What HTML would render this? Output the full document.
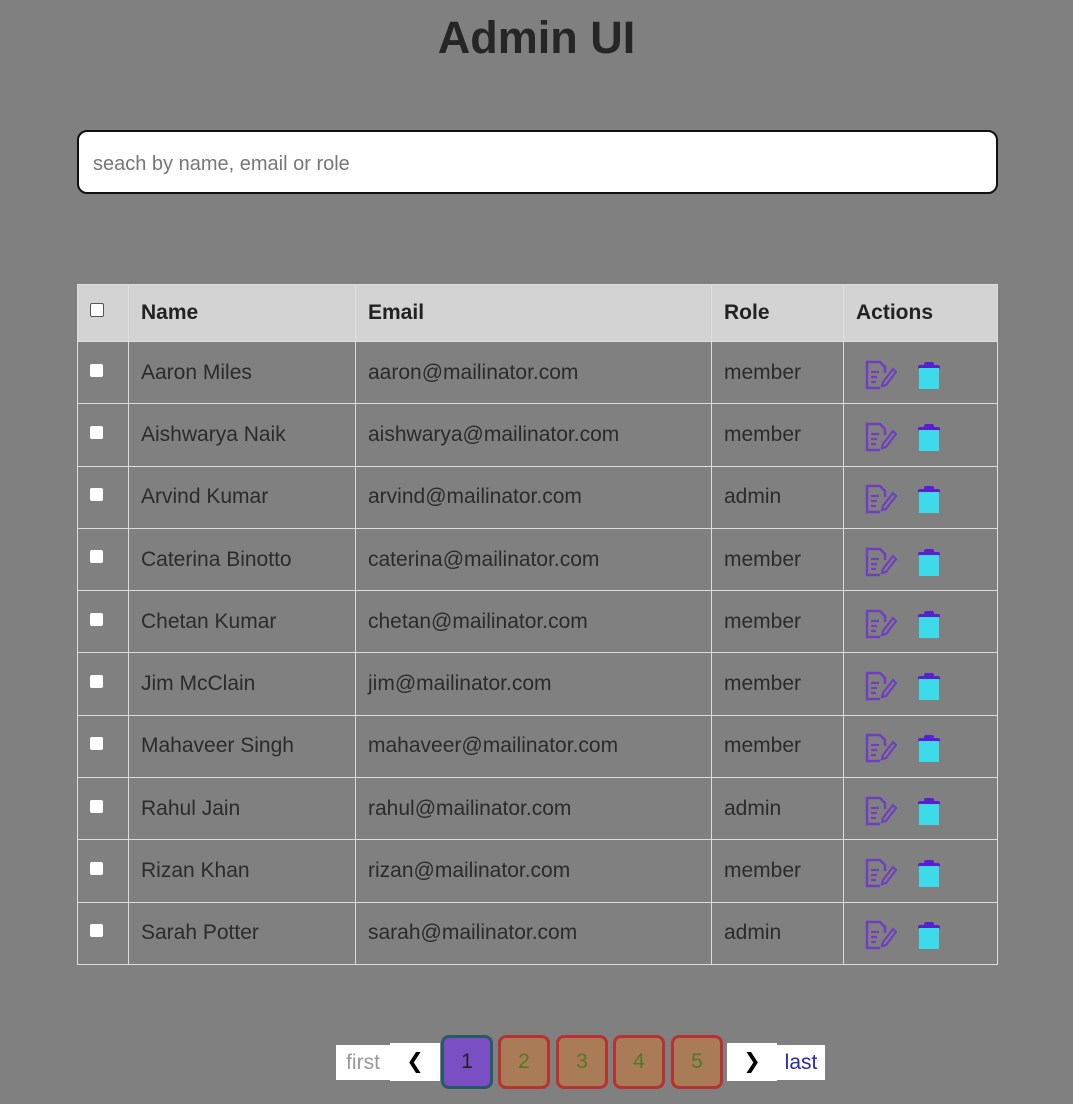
<!DOCTYPE html>
<html><head><style>
body{margin:0;background:#808080;font-family:"Liberation Sans","DejaVu Sans",sans-serif;width:1073px;height:1104px;position:relative;overflow:hidden}
h1{position:absolute;left:0;right:0;top:12px;margin:0;text-align:center;font-size:45px;font-weight:bold;color:#262626}
.search{position:absolute;left:77px;top:130px;background:#fff;border:2px solid #111;border-radius:10px;box-sizing:border-box;width:921px;height:64px;font-size:20px;color:#777;padding:21px 14px}
table{position:absolute;left:77px;top:284px;width:921px;border-collapse:collapse;table-layout:fixed}
td,th{border:1.5px solid #ddd;text-align:left;padding:0 12px;font-size:21px;color:#2b2b2b;overflow:hidden;white-space:nowrap}
th{background:#d3d3d3;height:56px;font-weight:bold;color:#222}
tr.r td{height:61.3px}
.cb{display:inline-block;width:13px;height:13px;background:#fff;border-radius:2px;vertical-align:middle;margin-top:-6px}
th .cb{border:1px solid #555;width:12px;height:12px}
.ic{display:inline-block;vertical-align:middle;margin-top:4px}
.box{position:absolute;background:#fff;font-size:21px;text-align:center;box-sizing:border-box}
.num{position:absolute;top:1035px;width:52px;height:54px;border:3px solid #b83232;border-radius:8px;background:#a97b56;color:#4e7a2a;font-size:21px;text-align:center;line-height:48px;box-sizing:border-box}
</style></head><body>
<h1>Admin UI</h1>
<div class="search">seach by name, email or role</div>
<table>
<colgroup><col style="width:51px"><col style="width:227px"><col style="width:356px"><col style="width:132px"><col></colgroup>
<tr><th><span class="cb"></span></th><th>Name</th><th>Email</th><th>Role</th><th>Actions</th></tr>
</table>
<script>
const d=[["Aaron Miles","aaron","member"],["Aishwarya Naik","aishwarya","member"],["Arvind Kumar","arvind","admin"],["Caterina Binotto","caterina","member"],["Chetan Kumar","chetan","member"],["Jim McClain","jim","member"],["Mahaveer Singh","mahaveer","member"],["Rahul Jain","rahul","admin"],["Rizan Khan","rizan","member"],["Sarah Potter","sarah","admin"]];
const edit='<svg class="ic" width="34" height="32" viewBox="0 0 34 32" style="margin-left:7px"><path d="M17 29H4V3h13l5 5v6" fill="none" stroke="#6f3fbf" stroke-width="2.5"/><path d="M8 13h8M8 18h6M8 23h5" stroke="#6f3fbf" stroke-width="2.2"/><path d="M30 10l3 3-10 13-4 1 1-4z" fill="none" stroke="#6f3fbf" stroke-width="2.2"/></svg>';
const del='<svg class="ic" width="26" height="30" viewBox="0 0 26 30" style="margin-left:19px"><rect x="2" y="5" width="22" height="4" rx="2" fill="#5a1fd0"/><rect x="8" y="2" width="10" height="4" rx="2" fill="#5a1fd0"/><rect x="3" y="8" width="20" height="21" fill="#3ddbea"/></svg>';
let h='';d.forEach(r=>{h+=`<tr class="r"><td><span class="cb"></span></td><td>${r[0]}</td><td>${r[1]}@mailinator.com</td><td>${r[2]}</td><td>${edit}${del}</td></tr>`});
document.querySelector('table').insertAdjacentHTML('beforeend',h);
</script>
<div class="box" style="left:336px;top:1045px;width:54px;height:35px;line-height:35px;color:#999">first</div>
<div class="box" style="left:390px;top:1043px;width:50px;height:38px;line-height:38px;color:#000;font-weight:bold">&#10094;</div>
<div class="num" style="left:441px;background:#7b4fc4;border-color:#265a66;color:#222">1</div>
<div class="num" style="left:498px">2</div>
<div class="num" style="left:556px">3</div>
<div class="num" style="left:613px">4</div>
<div class="num" style="left:671px">5</div>
<div class="box" style="left:727px;top:1043px;width:50px;height:38px;line-height:38px;color:#000;font-weight:bold">&#10095;</div>
<div class="box" style="left:777px;top:1045px;width:48px;height:35px;line-height:35px;color:#2626b8">last</div>
</body></html>
